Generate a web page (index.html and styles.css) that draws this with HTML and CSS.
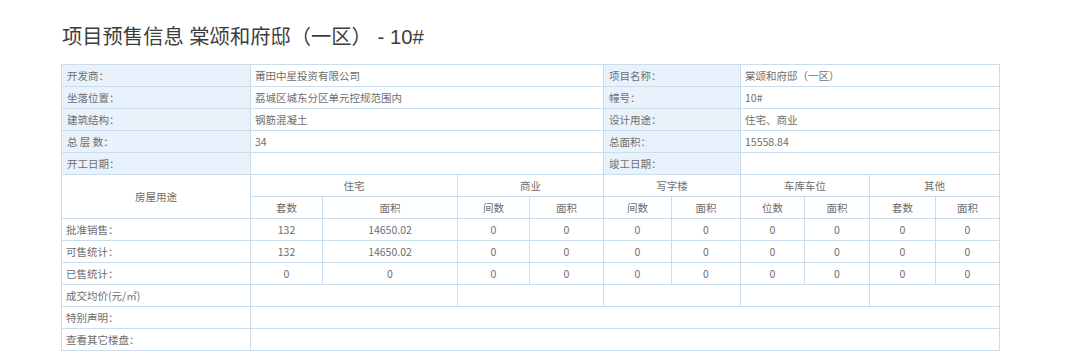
FILE: index.html
```html
<!DOCTYPE html>
<html lang="zh-CN">
<head>
<meta charset="utf-8">
<title>项目预售信息</title>
<link rel="stylesheet" href="styles.css">
</head>
<body>
<div class="page">
  <h1 class="title">项目预售信息 棠颂和府邸（一区） - 10#</h1>
  <table class="info">
    <colgroup>
      <col class="c-label">
      <col class="c1"><col class="c2"><col class="c3"><col class="c4">
      <col class="c5"><col class="c6"><col class="c7"><col class="c8">
      <col class="c9"><col class="c10">
    </colgroup>
    <tbody>
      <tr>
        <td class="lbl">开发商：</td>
        <td colspan="4">莆田中星投资有限公司</td>
        <td class="lbl" colspan="2">项目名称：</td>
        <td colspan="4">棠颂和府邸（一区）</td>
      </tr>
      <tr>
        <td class="lbl">坐落位置：</td>
        <td colspan="4">荔城区城东分区单元控规范围内</td>
        <td class="lbl" colspan="2">幢号：</td>
        <td colspan="4">10#</td>
      </tr>
      <tr>
        <td class="lbl">建筑结构：</td>
        <td colspan="4">钢筋混凝土</td>
        <td class="lbl" colspan="2">设计用途：</td>
        <td colspan="4">住宅、商业</td>
      </tr>
      <tr>
        <td class="lbl">总 层 数：</td>
        <td colspan="4">34</td>
        <td class="lbl" colspan="2">总面积：</td>
        <td colspan="4">15558.84</td>
      </tr>
      <tr>
        <td class="lbl">开工日期：</td>
        <td colspan="4"></td>
        <td class="lbl" colspan="2">竣工日期：</td>
        <td colspan="4"></td>
      </tr>
      <tr class="num">
        <td rowspan="2" class="head">房屋用途</td>
        <td colspan="2">住宅</td>
        <td colspan="2">商业</td>
        <td colspan="2">写字楼</td>
        <td colspan="2">车库车位</td>
        <td colspan="2">其他</td>
      </tr>
      <tr class="num">
        <td>套数</td><td>面积</td>
        <td>间数</td><td>面积</td>
        <td>间数</td><td>面积</td>
        <td>位数</td><td>面积</td>
        <td>套数</td><td>面积</td>
      </tr>
      <tr class="num">
        <td class="row-lbl">批准销售：</td>
        <td>132</td><td>14650.02</td>
        <td>0</td><td>0</td><td>0</td><td>0</td>
        <td>0</td><td>0</td><td>0</td><td>0</td>
      </tr>
      <tr class="num">
        <td class="row-lbl">可售统计：</td>
        <td>132</td><td>14650.02</td>
        <td>0</td><td>0</td><td>0</td><td>0</td>
        <td>0</td><td>0</td><td>0</td><td>0</td>
      </tr>
      <tr class="num">
        <td class="row-lbl">已售统计：</td>
        <td>0</td><td>0</td>
        <td>0</td><td>0</td><td>0</td><td>0</td>
        <td>0</td><td>0</td><td>0</td><td>0</td>
      </tr>
      <tr>
        <td>成交均价(元/㎡)</td>
        <td colspan="2"></td>
        <td colspan="2"></td>
        <td colspan="2"></td>
        <td colspan="2"></td>
        <td colspan="2"></td>
      </tr>
      <tr>
        <td>特别声明：</td>
        <td colspan="10"></td>
      </tr>
      <tr>
        <td>查看其它楼盘：</td>
        <td colspan="10"></td>
      </tr>
    </tbody>
  </table>
</div>
</body>
</html>
```

FILE: styles.css
```css
html, body {
  margin: 0;
  padding: 0;
  background: #ffffff;
}

body {
  font-family: "Noto Sans CJK SC", "Noto Sans", "Liberation Sans", sans-serif;
  color: #6e6e6e;
}

.page {
  padding: 22px 0 0 61px;
}

.title {
  margin: 0 0 12px 1px;
  font-family: "Liberation Sans", "Noto Sans CJK SC", sans-serif;
  font-size: 20.3px;
  line-height: 30px;
  font-weight: normal;
  color: #3d3d3d;
  white-space: nowrap;
}

.info {
  border-collapse: collapse;
  table-layout: fixed;
  width: 938px;
  font-size: 10.5px;
}

.c-label { width: 189px; }
.c1 { width: 72px; }
.c2 { width: 135px; }
.c3 { width: 72px; }
.c4 { width: 74px; }
.c5 { width: 68px; }
.c6 { width: 69px; }
.c7 { width: 64px; }
.c8 { width: 65px; }
.c9 { width: 66px; }
.c10 { width: 64px; }

.info td {
  border: 1px solid #c9ddee;
  height: 21px;
  padding: 0 4px;
  line-height: 14px;
  white-space: nowrap;
  overflow: hidden;
  text-align: left;
  vertical-align: middle;
}

.info td.lbl {
  background: #e9f2fb;
  padding-left: 5px;
}

.info tr.num td {
  text-align: center;
}

.info tr.num td.row-lbl {
  text-align: left;
}
```
